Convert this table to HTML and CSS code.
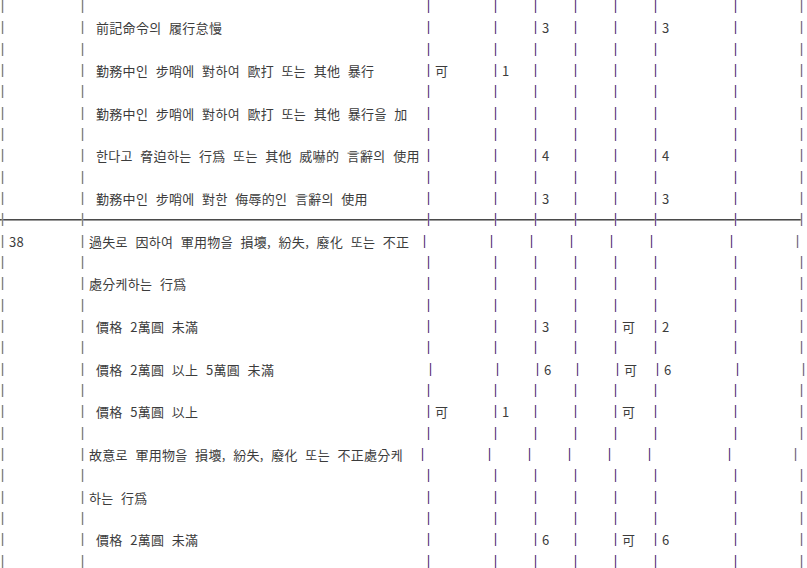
FILE: index.html
```html
<!DOCTYPE html>
<html lang="ko">
<head>
<meta charset="utf-8">
<title>표</title>
<link rel="stylesheet" href="styles.css">
</head>
<body>
<div class="sheet">
  <div class="ln"><span class="c c0"></span><span class="c c1"></span><span class="c c2"></span><span class="c c3"></span><span class="c c4"></span><span class="c c5"></span><span class="c c6"></span><span class="c c7"></span><span class="c c8"></span><span class="c c9"></span></div>
  <div class="ln"><span class="c c0"></span><span class="c c1"><span class="t ind">前記命令의 履行怠慢</span></span><span class="c c2"></span><span class="c c3"></span><span class="c c4"><span class="t">3</span></span><span class="c c5"></span><span class="c c6"></span><span class="c c7"><span class="t">3</span></span><span class="c c8"></span><span class="c c9"></span></div>
  <div class="ln"><span class="c c0"></span><span class="c c1"></span><span class="c c2"></span><span class="c c3"></span><span class="c c4"></span><span class="c c5"></span><span class="c c6"></span><span class="c c7"></span><span class="c c8"></span><span class="c c9"></span></div>
  <div class="ln"><span class="c c0"></span><span class="c c1"><span class="t ind">勤務中인 步哨에 對하여 歐打 또는 其他 暴行</span></span><span class="c c2"><span class="t">可</span></span><span class="c c3"><span class="t">1</span></span><span class="c c4"></span><span class="c c5"></span><span class="c c6"></span><span class="c c7"></span><span class="c c8"></span><span class="c c9"></span></div>
  <div class="ln"><span class="c c0"></span><span class="c c1"></span><span class="c c2"></span><span class="c c3"></span><span class="c c4"></span><span class="c c5"></span><span class="c c6"></span><span class="c c7"></span><span class="c c8"></span><span class="c c9"></span></div>
  <div class="ln"><span class="c c0"></span><span class="c c1"><span class="t ind">勤務中인 步哨에 對하여 歐打 또는 其他 暴行을 加</span></span><span class="c c2"></span><span class="c c3"></span><span class="c c4"></span><span class="c c5"></span><span class="c c6"></span><span class="c c7"></span><span class="c c8"></span><span class="c c9"></span></div>
  <div class="ln"><span class="c c0"></span><span class="c c1"></span><span class="c c2"></span><span class="c c3"></span><span class="c c4"></span><span class="c c5"></span><span class="c c6"></span><span class="c c7"></span><span class="c c8"></span><span class="c c9"></span></div>
  <div class="ln"><span class="c c0"></span><span class="c c1"><span class="t ind">한다고 脅迫하는 行爲 또는 其他 威嚇的 言辭의 使用</span></span><span class="c c2"></span><span class="c c3"></span><span class="c c4"><span class="t">4</span></span><span class="c c5"></span><span class="c c6"></span><span class="c c7"><span class="t">4</span></span><span class="c c8"></span><span class="c c9"></span></div>
  <div class="ln"><span class="c c0"></span><span class="c c1"></span><span class="c c2"></span><span class="c c3"></span><span class="c c4"></span><span class="c c5"></span><span class="c c6"></span><span class="c c7"></span><span class="c c8"></span><span class="c c9"></span></div>
  <div class="ln"><span class="c c0"></span><span class="c c1"><span class="t ind">勤務中인 步哨에 對한 侮辱的인 言辭의 使用</span></span><span class="c c2"></span><span class="c c3"></span><span class="c c4"><span class="t">3</span></span><span class="c c5"></span><span class="c c6"></span><span class="c c7"><span class="t">3</span></span><span class="c c8"></span><span class="c c9"></span></div>
  <div class="ln rule"><span class="c c0"></span><span class="c c1"></span><span class="c c2"></span><span class="c c3"></span><span class="c c4"></span><span class="c c5"></span><span class="c c6"></span><span class="c c7"></span><span class="c c8"></span><span class="c c9"></span></div>
  <div class="ln shift-l4"><span class="c c0"><span class="t">38</span></span><span class="c c1"><span class="t">過失로 因하여 軍用物을 損壞, 紛失, 廢化 또는 不正</span></span><span class="c c2"></span><span class="c c3"></span><span class="c c4"></span><span class="c c5"></span><span class="c c6"></span><span class="c c7"></span><span class="c c8"></span><span class="c c9"></span></div>
  <div class="ln"><span class="c c0"></span><span class="c c1"></span><span class="c c2"></span><span class="c c3"></span><span class="c c4"></span><span class="c c5"></span><span class="c c6"></span><span class="c c7"></span><span class="c c8"></span><span class="c c9"></span></div>
  <div class="ln"><span class="c c0"></span><span class="c c1"><span class="t">處分케하는 行爲</span></span><span class="c c2"></span><span class="c c3"></span><span class="c c4"></span><span class="c c5"></span><span class="c c6"></span><span class="c c7"></span><span class="c c8"></span><span class="c c9"></span></div>
  <div class="ln"><span class="c c0"></span><span class="c c1"></span><span class="c c2"></span><span class="c c3"></span><span class="c c4"></span><span class="c c5"></span><span class="c c6"></span><span class="c c7"></span><span class="c c8"></span><span class="c c9"></span></div>
  <div class="ln"><span class="c c0"></span><span class="c c1"><span class="t ind">價格 2萬圓 未滿</span></span><span class="c c2"></span><span class="c c3"></span><span class="c c4"><span class="t">3</span></span><span class="c c5"></span><span class="c c6"><span class="t">可</span></span><span class="c c7"><span class="t">2</span></span><span class="c c8"></span><span class="c c9"></span></div>
  <div class="ln"><span class="c c0"></span><span class="c c1"></span><span class="c c2"></span><span class="c c3"></span><span class="c c4"></span><span class="c c5"></span><span class="c c6"></span><span class="c c7"></span><span class="c c8"></span><span class="c c9"></span></div>
  <div class="ln shift-r2"><span class="c c0"></span><span class="c c1"><span class="t ind">價格 2萬圓 以上 5萬圓 未滿</span></span><span class="c c2"></span><span class="c c3"></span><span class="c c4"><span class="t">6</span></span><span class="c c5"></span><span class="c c6"><span class="t">可</span></span><span class="c c7"><span class="t">6</span></span><span class="c c8"></span><span class="c c9"></span></div>
  <div class="ln"><span class="c c0"></span><span class="c c1"></span><span class="c c2"></span><span class="c c3"></span><span class="c c4"></span><span class="c c5"></span><span class="c c6"></span><span class="c c7"></span><span class="c c8"></span><span class="c c9"></span></div>
  <div class="ln"><span class="c c0"></span><span class="c c1"><span class="t ind">價格 5萬圓 以上</span></span><span class="c c2"><span class="t">可</span></span><span class="c c3"><span class="t">1</span></span><span class="c c4"></span><span class="c c5"></span><span class="c c6"><span class="t">可</span></span><span class="c c7"></span><span class="c c8"></span><span class="c c9"></span></div>
  <div class="ln"><span class="c c0"></span><span class="c c1"></span><span class="c c2"></span><span class="c c3"></span><span class="c c4"></span><span class="c c5"></span><span class="c c6"></span><span class="c c7"></span><span class="c c8"></span><span class="c c9"></span></div>
  <div class="ln shift-l6"><span class="c c0"></span><span class="c c1"><span class="t">故意로 軍用物을 損壞, 紛失, 廢化 또는 不正處分케</span></span><span class="c c2"></span><span class="c c3"></span><span class="c c4"></span><span class="c c5"></span><span class="c c6"></span><span class="c c7"></span><span class="c c8"></span><span class="c c9"></span></div>
  <div class="ln"><span class="c c0"></span><span class="c c1"></span><span class="c c2"></span><span class="c c3"></span><span class="c c4"></span><span class="c c5"></span><span class="c c6"></span><span class="c c7"></span><span class="c c8"></span><span class="c c9"></span></div>
  <div class="ln"><span class="c c0"></span><span class="c c1"><span class="t">하는 行爲</span></span><span class="c c2"></span><span class="c c3"></span><span class="c c4"></span><span class="c c5"></span><span class="c c6"></span><span class="c c7"></span><span class="c c8"></span><span class="c c9"></span></div>
  <div class="ln"><span class="c c0"></span><span class="c c1"></span><span class="c c2"></span><span class="c c3"></span><span class="c c4"></span><span class="c c5"></span><span class="c c6"></span><span class="c c7"></span><span class="c c8"></span><span class="c c9"></span></div>
  <div class="ln"><span class="c c0"></span><span class="c c1"><span class="t ind">價格 2萬圓 未滿</span></span><span class="c c2"></span><span class="c c3"></span><span class="c c4"><span class="t">6</span></span><span class="c c5"></span><span class="c c6"><span class="t">可</span></span><span class="c c7"><span class="t">6</span></span><span class="c c8"></span><span class="c c9"></span></div>
  <div class="ln"><span class="c c0"></span><span class="c c1"></span><span class="c c2"></span><span class="c c3"></span><span class="c c4"></span><span class="c c5"></span><span class="c c6"></span><span class="c c7"></span><span class="c c8"></span><span class="c c9"></span></div>
</div>
</body>
</html>
```

FILE: styles.css
```css
html, body {
  margin: 0;
  padding: 0;
  background: #ffffff;
}

.sheet {
  font-family: "Noto Sans CJK KR", "Noto Sans", sans-serif;
  font-size: 13px;
  line-height: 14px;
  color: #3c3c3c;
  letter-spacing: 0.3px;
  word-spacing: 3.6px;
}

.ln {
  display: flex;
  align-items: flex-start;
  height: 21.333px;
  padding-left: 2px;
}

.c {
  display: flex;
  align-items: flex-start;
  flex: none;
  white-space: nowrap;
}

.c::before {
  content: "";
  flex: none;
  width: 1px;
  height: 13px;
  margin-right: 6px;
  background: #7a4c98;
  box-shadow: -1px 0 0 rgba(205, 195, 120, 0.35), 1px 0 0 rgba(120, 160, 225, 0.35);
}

.c0::before,
.c1::before {
  background: #8a8488;
}

.c0 { width: 80px; }
.c1 { width: 346px; }
.c2 { width: 67px; }
.c3 { width: 40px; }
.c4 { width: 40px; }
.c5 { width: 40px; }
.c6 { width: 40px; }
.c7 { width: 80px; }
.c8 { width: 66px; }
.c9 { width: 4px; }

.c9::before {
  background: #8a7494;
}

.t {
  display: block;
}

.ind {
  padding-left: 7px;
}

.shift-l4 .c1 { width: 342px; }
.shift-l6 .c1 { width: 340px; }
.shift-r2 .c1 { width: 348px; }

.rule {
  width: 802px;
  padding-left: 2px;
  background-image: linear-gradient(to bottom,
    transparent 0, transparent 6px,
    #4a4a4a 6px, #4a4a4a 7px,
    #9a9a9a 7px, #9a9a9a 8px,
    transparent 8px);
  background-repeat: no-repeat;
  background-size: 802px 100%;
}
```
